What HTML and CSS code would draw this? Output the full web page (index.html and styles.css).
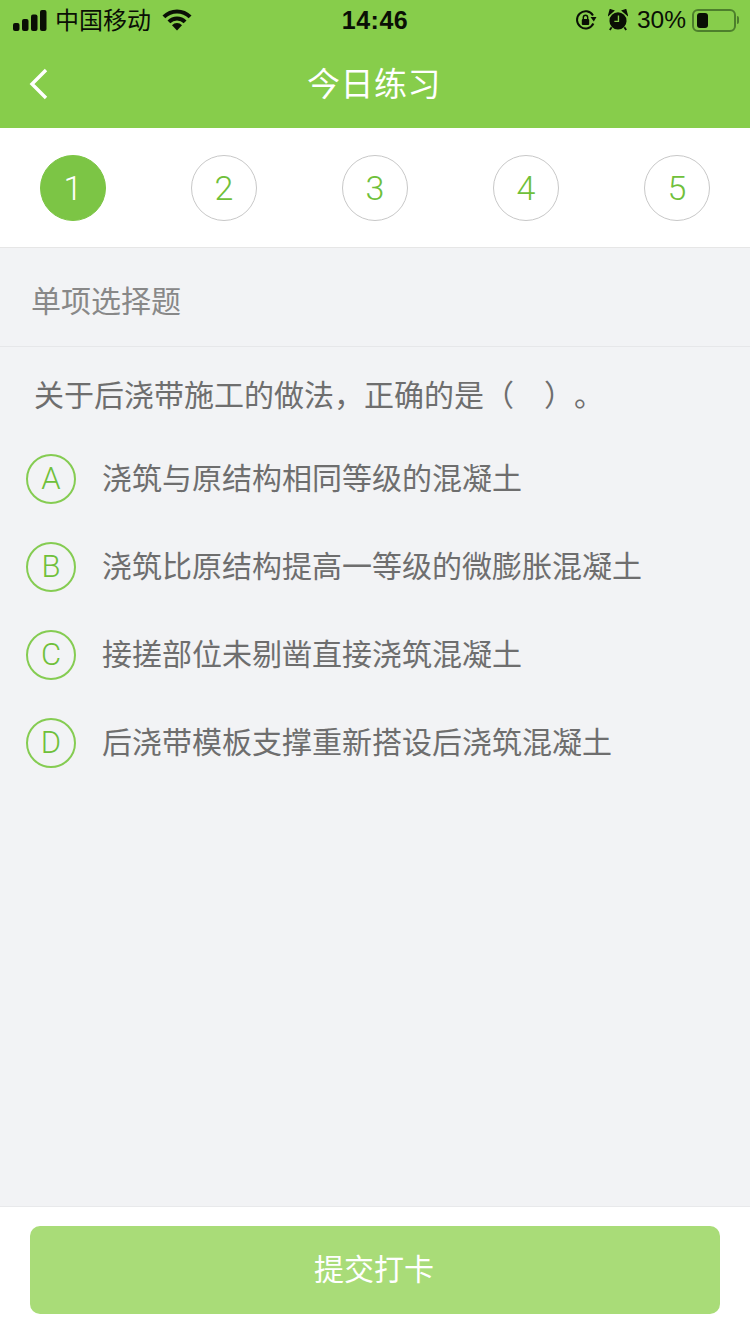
FILE: index.html
```html
<!DOCTYPE html>
<html lang="zh-CN">
<head>
    <meta charset="UTF-8">
    <meta name="viewport" content="width=device-width, initial-scale=1.0">
    <title>今日练习</title>
    <link rel="stylesheet" href="styles.css">
</head>
<body>
    <div class="page">
        <header class="top">
            <div class="status">
                <div class="status-left">
                    <svg class="signal" width="34" height="21" viewBox="0 0 34 21">
                        <rect x="0" y="13" width="6.5" height="8" rx="2"/>
                        <rect x="9" y="9" width="6.5" height="12" rx="2"/>
                        <rect x="18" y="4.5" width="6.5" height="16.5" rx="2"/>
                        <rect x="27" y="0" width="6.5" height="21" rx="2"/>
                    </svg>
                    <span class="carrier">中国移动</span>
                    <svg class="wifi" width="30" height="22" viewBox="0 0 30 22">
                        <path d="M1.9 7.9 A18.5 18.5 0 0 1 28.1 7.9" fill="none" stroke="#0a0f05" stroke-width="4"/>
                        <path d="M6.9 12.9 A11.5 11.5 0 0 1 23.1 12.9" fill="none" stroke="#0a0f05" stroke-width="4"/>
                        <path d="M15 21.5 L10 16.2 A7 7 0 0 1 20 16.2 Z" fill="#0a0f05"/>
                    </svg>
                </div>
                <div class="time">14:46</div>
                <div class="status-right">
                    <svg width="22" height="22" viewBox="0 0 22 22">
                        <path d="M18.4 14.5 A8.6 8.6 0 1 1 18 6.4" fill="none" stroke="#0a0f05" stroke-width="2"/>
                        <path d="M15.5 8 L21.5 8 L18.8 12.5 Z" fill="#0a0f05"/>
                        <rect x="6.8" y="10" width="7.4" height="6" rx="1" fill="#0a0f05"/>
                        <path d="M8.3 10 V8.4 A2.2 2.2 0 0 1 12.7 8.4 V10" fill="none" stroke="#0a0f05" stroke-width="1.4"/>
                    </svg>
                    <svg class="alarm" width="20" height="22" viewBox="0 0 22 24">
                        <circle cx="11" cy="13" r="9.4" fill="#0a0f05"/>
                        <path d="M0.8 6.5 L6.2 1.8 L2.4 0.6 Z M21.2 6.5 L15.8 1.8 L19.6 0.6 Z" fill="#0a0f05" stroke="#0a0f05" stroke-width="1.4"/>
                        <path d="M4 20 L2 23 M18 20 L20 23" stroke="#0a0f05" stroke-width="2"/>
                        <path d="M11.5 7 V13.5 H7" fill="none" stroke="#87cd4b" stroke-width="1.5"/>
                    </svg>
                    <span class="percent">30%</span>
                    <div class="battery">
                        <div class="battery-body"><div class="battery-level"></div></div>
                        <div class="battery-tip"></div>
                    </div>
                </div>
            </div>
            <div class="navbar">
                <svg class="back" width="20" height="32" viewBox="0 0 20 32">
                    <path d="M17 2 L3 16 L17 30" fill="none" stroke="#fff" stroke-width="3.4"/>
                </svg>
                <h1>今日练习</h1>
            </div>
        </header>

        <nav class="steps">
            <div class="step active">1</div>
            <div class="step">2</div>
            <div class="step">3</div>
            <div class="step">4</div>
            <div class="step">5</div>
        </nav>

        <main class="content">
            <div class="qtype">单项选择题</div>
            <p class="question">关于后浇带施工的做法，正确的是（&emsp;）。</p>
            <ul class="options">
                <li><span class="letter">A</span><span class="option-text">浇筑与原结构相同等级的混凝土</span></li>
                <li><span class="letter">B</span><span class="option-text">浇筑比原结构提高一等级的微膨胀混凝土</span></li>
                <li><span class="letter">C</span><span class="option-text">接搓部位未剔凿直接浇筑混凝土</span></li>
                <li><span class="letter">D</span><span class="option-text">后浇带模板支撑重新搭设后浇筑混凝土</span></li>
            </ul>
        </main>

        <footer class="bottom">
            <button class="submit">提交打卡</button>
        </footer>
    </div>
</body>
</html>
```

FILE: styles.css
```css
* {
    box-sizing: border-box;
}

body {
    margin: 0;
    padding: 0;
    font-family: "Liberation Sans", "Noto Sans CJK SC", sans-serif;
    background-color: #f2f3f5;
}

.page {
    display: flex;
    flex-direction: column;
    width: 750px;
    height: 1334px;
    overflow: hidden;
}

.top {
    height: 128px;
    background-color: #87cd4b;
}

.status {
    display: flex;
    align-items: center;
    justify-content: space-between;
    height: 40px;
    padding: 0 13px;
    color: #0a0f05;
}

.status-left,
.status-right {
    display: flex;
    align-items: center;
    width: 240px;
}

.status-right {
    justify-content: flex-end;
}

.signal {
    fill: #0a0f05;
}

.carrier {
    margin-left: 8px;
    padding-bottom: 3px;
    font-size: 24px;
}

.wifi {
    margin-left: 11px;
}

.time {
    padding-top: 1px;
    font-size: 25px;
    font-weight: bold;
    letter-spacing: 0.5px;
}

.alarm {
    margin-left: 11px;
}

.percent {
    margin-left: 9px;
    font-size: 24.5px;
}

.battery {
    display: flex;
    align-items: center;
    margin-left: 6px;
    margin-right: -2px;
}

.battery-body {
    width: 44px;
    height: 23px;
    padding: 2px 3px;
    border: 2px solid #4d7f2c;
    border-radius: 6px;
}

.battery-level {
    width: 11px;
    height: 100%;
    background-color: #0a0f05;
    border-radius: 3px;
}

.battery-tip {
    width: 2px;
    height: 8px;
    margin-left: 1px;
    background-color: #4d7f2c;
    border-radius: 0 2px 2px 0;
}

.navbar {
    position: relative;
    display: flex;
    align-items: center;
    justify-content: center;
    height: 88px;
}

.back {
    position: absolute;
    left: 29px;
    top: 28px;
}

.navbar h1 {
    margin: 0 0 4px -2px;
    font-size: 33px;
    font-weight: normal;
    color: #fff;
    letter-spacing: 0.5px;
}

.steps {
    display: flex;
    justify-content: space-between;
    height: 120px;
    padding: 27px 40px 0;
    background-color: #fff;
    border-bottom: 1px solid #e6e6e6;
}

.step {
    display: flex;
    align-items: center;
    justify-content: center;
    width: 66px;
    height: 66px;
    font-family: Roboto, "Liberation Sans", sans-serif;
    font-size: 34px;
    font-weight: 300;
    color: #6fc03a;
    background-color: #fff;
    border: 1px solid #c8c8c8;
    border-radius: 50%;
}

.step.active {
    color: #fff;
    background-color: #7cc545;
    border-color: #7cc545;
}

.content {
    flex: 1;
}

.qtype {
    height: 99px;
    padding: 0 31px;
    line-height: 108px;
    font-size: 30px;
    color: #888;
    border-bottom: 1px solid #e6e7e9;
}

.question {
    margin: 0;
    padding: 29px 0 0 34px;
    line-height: 40px;
    font-size: 30px;
    color: #6e6e6e;
    text-spacing-trim: space-all;
}

.options {
    margin: 19px 0 0;
    padding: 0 0 0 26px;
    list-style: none;
}

.options li {
    display: flex;
    align-items: center;
    height: 88px;
    font-size: 30px;
    color: #6e6e6e;
}

.option-text {
    padding-bottom: 6px;
}

.letter {
    display: flex;
    align-items: center;
    justify-content: center;
    width: 50px;
    height: 50px;
    margin-right: 26px;
    padding-bottom: 2px;
    font-family: Roboto, "Liberation Sans", sans-serif;
    font-size: 31px;
    font-weight: 300;
    color: #6fc03a;
    border: 2px solid #85cc52;
    border-radius: 50%;
}

.bottom {
    height: 128px;
    padding: 19px 30px 0;
    background-color: #fff;
    border-top: 1px solid #e8e9eb;
}

.submit {
    display: block;
    width: 690px;
    height: 88px;
    padding: 0 2px 6px 0;
    font-family: inherit;
    font-size: 30px;
    color: #fff;
    background-color: #a9dc78;
    border: none;
    border-radius: 10px;
}
```
